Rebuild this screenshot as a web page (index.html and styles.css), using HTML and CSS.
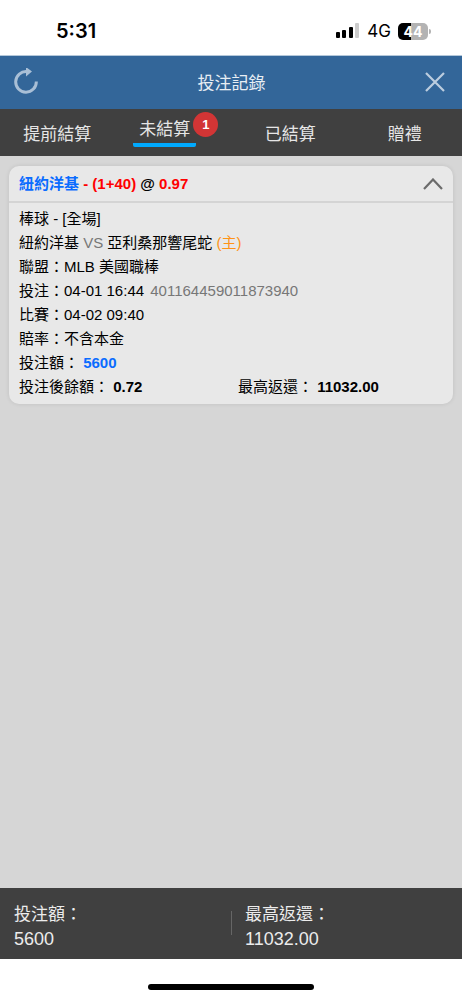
FILE: index.html
```html
<!DOCTYPE html>
<html lang="zh-Hant">
<head>
<meta charset="UTF-8">
<meta name="viewport" content="width=device-width, initial-scale=1">
<title>投注記錄</title>
<link rel="stylesheet" href="styles.css">
</head>
<body>

<div class="status-bar">
  <span class="time">5:31</span>
  <div class="status-icons">
    <svg width="24" height="16" viewBox="0 0 24 16">
      <rect x="0" y="9" width="4" height="6" rx="1"/>
      <rect x="6" y="7" width="4" height="8" rx="1"/>
      <rect x="13" y="4" width="4" height="11" rx="1"/>
      <rect x="19" y="0" width="4" height="15" rx="1" fill="#cccccc"/>
    </svg>
    <span class="network">4G</span>
    <div class="battery"><span class="battery-level">44</span></div>
  </div>
</div>

<header>
  <button class="icon-btn" aria-label="重新整理">
    <svg width="24" height="28" viewBox="0 0 24 28" fill="none">
      <path d="M13 3.6A10.3 10.3 0 1 0 22.3 13.5" stroke="#a9bfd6" stroke-width="3"/>
      <path d="M12 -1L18 3.6L12 8.5Z" fill="#a9bfd6"/>
    </svg>
  </button>
  <h1>投注記錄</h1>
  <button class="icon-btn" aria-label="關閉">
    <svg width="20" height="20" viewBox="0 0 20 20" fill="none">
      <path d="M1 1L19 19M19 1L1 19" stroke="#bccddf" stroke-width="2.2"/>
    </svg>
  </button>
</header>

<nav>
  <button class="tab">提前結算</button>
  <button class="tab active"><span class="tab-label">未結算</span><span class="badge">1</span></button>
  <button class="tab">已結算</button>
  <button class="tab">贈禮</button>
</nav>

<main>
  <div class="card">
    <div class="card-header">
      <h2><span class="blue">紐約洋基</span> <span class="red">- (1+40)</span> @ <span class="red">0.97</span></h2>
      <button class="icon-btn" aria-label="收合">
        <svg width="20" height="12" viewBox="0 0 20 12" fill="none">
          <path d="M1 11L10 1.5L19 11" stroke="#6b6b6b" stroke-width="2.2"/>
        </svg>
      </button>
    </div>
    <div class="card-body">
      <p>棒球 - [全場]</p>
      <p>紐約洋基 <span class="gray">VS</span> 亞利桑那響尾蛇 <span class="orange">(主)</span></p>
      <p>聯盟：MLB 美國職棒</p>
      <p>投注：04-01 16:44 <span class="bet-id gray">401164459011873940</span></p>
      <p>比賽：04-02 09:40</p>
      <p>賠率：不含本金</p>
      <p>投注額： <b class="blue">5600</b></p>
      <div class="row">
        <p>投注後餘額： <b>0.72</b></p>
        <p>最高返還： <b>11032.00</b></p>
      </div>
    </div>
  </div>
</main>

<footer>
  <div class="total">
    <p>投注額：</p>
    <p class="amount">5600</p>
  </div>
  <div class="total">
    <p>最高返還：</p>
    <p class="amount">11032.00</p>
  </div>
</footer>

<div class="home-bar"><span></span></div>

</body>
</html>
```
FILE: styles.css
```css
* { box-sizing: border-box; }
body {
  margin: 0;
  min-height: 100vh;
  display: flex;
  flex-direction: column;
  font-family: "Liberation Sans", "Noto Sans CJK TC", sans-serif;
  background: white;
  color: black;
}
h1, h2, p { margin: 0; }
button {
  background: none;
  border: none;
  padding: 0;
  font-family: inherit;
  color: inherit;
  cursor: pointer;
}
.icon-btn { display: flex; }

.status-bar {
  height: 56px;
  padding: 7px 34px 0 56px;
  display: flex;
  align-items: center;
  justify-content: space-between;
  border-bottom: 1px solid #b4c8da;
  font-family: Inter, sans-serif;
}
.time { font-size: 20px; font-weight: 600; }
.status-icons { display: flex; align-items: center; gap: 7px; }
.network { font-size: 17px; }
.battery {
  position: relative;
  width: 30px;
  height: 17px;
  border-radius: 5px;
  background: linear-gradient(to right, black 45%, #b3b3b3 45%);
  color: white;
  text-align: center;
}
.battery::after {
  content: "";
  position: absolute;
  right: -3px;
  top: 6px;
  width: 2px;
  height: 5px;
  border-radius: 0 2px 2px 0;
  background: #b3b3b3;
}
.battery-level { display: block; font-size: 14px; line-height: 17px; font-weight: 700; }

header {
  height: 53px;
  padding: 0 17px 2px 14px;
  display: flex;
  align-items: center;
  justify-content: space-between;
  background: #336699;
  color: #e8eef4;
}
header h1 { font-size: 17px; font-weight: normal; }

nav { height: 47px; display: flex; background: #404040; color: #e6e6e6; }
.tab {
  flex: 1;
  display: flex;
  justify-content: center;
  align-items: center;
  font-size: 17px;
}
.tab.active { align-items: flex-start; padding: 3px 0 0 4px; }
.tab-label {
  margin-top: 3px;
  padding: 0 6px;
  height: 32px;
  line-height: 30px;
  border-bottom: 4px solid #00aaff;
  border-radius: 2px;
}
.badge {
  width: 25px;
  height: 25px;
  margin-left: -3px;
  border-radius: 50%;
  background: #d23535;
  color: white;
  font-size: 13px;
  line-height: 25px;
  font-weight: bold;
}

main { flex: 1; padding: 10px 9px; background: #d6d6d6; }
.card {
  border-radius: 10px;
  background: #e8e8e8;
  box-shadow: 0 0 4px rgba(0, 0, 0, 0.1);
  font-size: 15px;
  line-height: 24px;
}
.card-header {
  height: 37px;
  padding: 0 10px;
  display: flex;
  align-items: center;
  justify-content: space-between;
  border-bottom: 2px solid #d4d4d4;
}
.card-header h2 { font-size: 15px; }
.card-body { padding: 4px 10px 5px; }
.row { display: flex; gap: 14px; }
.row p { flex: 1; }
.blue { color: #0a6cff; }
.red { color: #ff0000; }
.gray { color: #777777; }
.orange { color: #ff9315; }
.bet-id { margin-left: 2px; }

footer {
  height: 71px;
  padding: 15px 0 0;
  display: flex;
  background: #404040;
  color: #ececec;
}
.total {
  flex: 1;
  padding-left: 14px;
  font-size: 17px;
  line-height: 24px;
}
.total + .total {
  background: linear-gradient(#666666, #666666) no-repeat left 8px / 1px 24px;
}
.amount { font-size: 18px; }

.home-bar {
  height: 41px;
  padding-top: 15px;
  display: flex;
  align-items: center;
  justify-content: center;
}
.home-bar span { width: 36%; height: 6px; border-radius: 3px; background: black; }
```
